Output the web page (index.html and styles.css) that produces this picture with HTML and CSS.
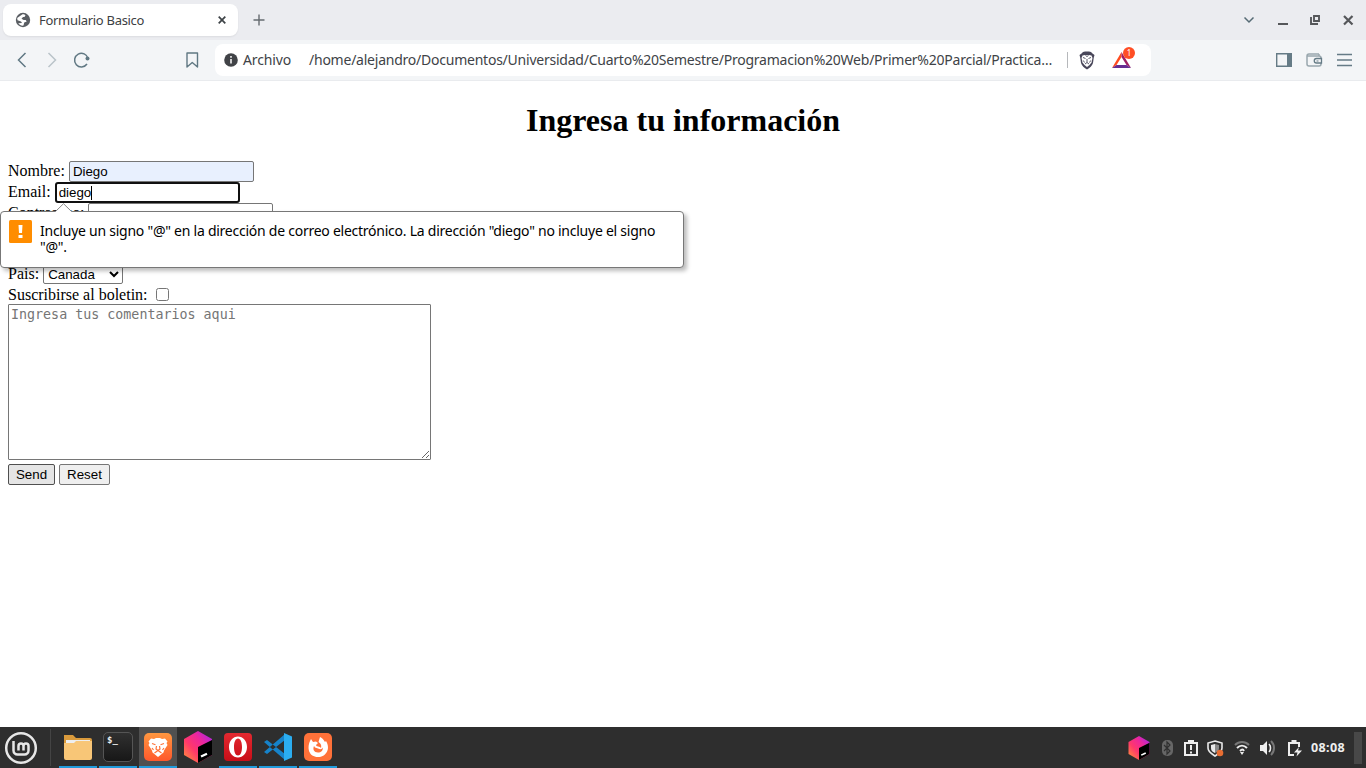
FILE: index.html
```html
<!DOCTYPE html>
<html lang="es">
<head>
<meta charset="utf-8">
<title>Formulario Basico</title>
<link rel="stylesheet" href="styles.css">
</head>
<body>
<svg class="defs" width="0" height="0">
  <defs>
    <linearGradient id="cube" x1="0" y1="1" x2="1" y2="0"><stop offset="0" stop-color="#ff9a35"/><stop offset=".38" stop-color="#ff386b"/><stop offset=".65" stop-color="#ed279a"/><stop offset="1" stop-color="#9a25f5"/></linearGradient>
    <linearGradient id="fade" x1="0" y1="0" x2="0" y2="1"><stop offset="0" stop-color="#ff9740"/><stop offset="1" stop-color="#ff582b"/></linearGradient>
    <linearGradient id="opera" x1="0" y1="0" x2="0" y2="1"><stop offset="0" stop-color="#e32930"/><stop offset="1" stop-color="#c90e18"/></linearGradient>
    <symbol id="toolbox" viewBox="0 0 32 32"><path fill="url(#cube)" d="M16 0 30 8v16L16 32 2 24V8z"/><path fill="#000" d="M16 16 30 9v15L16 32z"/><path stroke="#fff" stroke-width="2.200" d="m19 25.500 6-2.800"/></symbol>
  </defs>
</svg>

<header class="tabs">
  <div class="tab">
    <svg width="16" height="16" viewBox="0 0 16 16"><circle cx="8" cy="8" r="7.200" fill="#5a5e63"/><path fill="#fff" d="M7.500 2.200c1.700 0 2.500.5 3 1.100L9.500 5H8L6.500 6.800 8.700 8h2l1 1.500-2.500 1-.7 3C6.800 14 4.500 13 3.300 11.300L7 11 6 9.500 2.500 8.300 2.200 6z"/></svg>
    <span class="tab-title">Formulario Basico</span>
    <svg width="8" height="8" viewBox="0 0 8 8"><path d="m.7.700 6.600 6.600m0-6.600L.7 7.300" stroke="#3e4347" stroke-width="1.700"/></svg>
  </div>
  <svg class="plus" width="12" height="12" viewBox="0 0 12 12"><path d="M6 .5v11M.5 6h11" stroke="#666b70" stroke-width="1.400"/></svg>
  <svg class="window" width="116" height="20" viewBox="1240 10 116 20" fill="none">
    <path d="m1244.500 17.500 4.500 4.500 4.500-4.500" stroke="#566b75" stroke-width="1.500"/>
    <path d="M1278 24h10" stroke="#55575a" stroke-width="2"/>
    <path d="M1314 16h5v5h-5zM1311 17v7h7" stroke="#55575a" stroke-width="1.900"/>
    <path d="m1344 16 8.500 8.500m0-8.500-8.500 8.500" stroke="#55575a" stroke-width="2.200"/>
  </svg>
</header>

<nav class="toolbar">
  <svg class="navigation" width="188" height="24" viewBox="14 48 188 24" fill="none">
    <path d="m25.500 53-7 7 7 7" stroke="#607883" stroke-width="1.500"/>
    <path d="m48.500 53 7 7-7 7" stroke="#bac4c9" stroke-width="1.500"/>
    <path d="M88 58.500a6.800 6.800 0 1 0-1 5.500" stroke="#607883" stroke-width="1.500"/><circle cx="87.500" cy="58.500" r="2" fill="#607883"/>
    <path d="M187 53h10.500v14l-5.250-4.500L187 67z" stroke="#607883" stroke-width="1.400" stroke-linejoin="round"/>
  </svg>
  <div class="address">
    <svg width="14" height="14" viewBox="0 0 14 14"><circle cx="7" cy="7" r="6.800" fill="#414347"/><path d="M7 3v1.800M7 6v4.500" stroke="#fff" stroke-width="1.500"/></svg>
    <span class="scheme">Archivo</span>
    <span class="url">/home/alejandro/Documentos/Universidad/Cuarto%20Semestre/Programacion%20Web/Primer%20Parcial/Practica…</span>
    <i class="divider"></i>
    <svg class="shield" width="16" height="19" viewBox="0 0 16 19"><path fill="#49475a" d="m4 1 2-.5h4l2 .5 1.500 1.500 2 1.500-.8 3-.7 5c-.5 2.500-3.500 5-6 6.500C5.500 17 2.500 14.500 2 12l-.7-5L.5 4l2-1.500z"/><path fill="#fff" d="M3.500 4.500 6 4h4l2.500.5 1 2.500-1 4.500-2 2.500L8 16l-2.500-2-2-2.500-1-4.500z"/><path d="m4 6.500 2.500 1M12 6.500l-2.500 1M8 8v3.500M6 13l2-1.500 2 1.500M4.300 9.500l1.200 2M11.700 9.500l-1.200 2M6.500 4.500 8 5.500l1.500-1" fill="none" stroke="#49475a" stroke-width=".9"/></svg>
    <span class="rewards"><svg width="19" height="17" viewBox="0 0 19 17"><path fill="#ff4b1f" d="M9.500 0 0 16l4.500-3L9.500 5z"/><path fill="#9e1f63" d="M9.500 0 19 16l-4.500-3L9.500 5z"/><path fill="#662d91" d="m0 16 4.500-3h10L19 16z"/></svg><b>1</b></span>
  </div>
  <svg class="tools" width="78" height="20" viewBox="1275 50 78 20" fill="none">
    <path d="M1276.700 53.700h14.600v12.600h-14.600z" stroke="#657b86" stroke-width="1.400"/><path fill="#657b86" d="M1287 53h5v14h-5z"/>
    <path d="M1319 54h-10a2 2 0 0 0-2 2v8a2 2 0 0 0 2 2h10a2 2 0 0 0 2-2v-6a2 2 0 0 0-2-2h-12M1319 54v2" stroke="#99a7ae" stroke-width="1.500"/><path d="M1321.500 58.500h-5a2 2 0 0 0 0 4.500h5z" fill="#f3f5f7" stroke="#657b86" stroke-width="1.300"/><path d="M1316.500 61h2" stroke="#657b86"/>
    <path d="M1337 54.500h15m-15 5.500h15m-15 5.500h15" stroke="#657b86" stroke-width="1.400"/>
  </svg>
</nav>

<main class="page">
  <h1>Ingresa tu información</h1>
  <form class="form">
    <label class="row"><span class="label">Nombre:</span><input class="field filled" value="Diego"></label>
    <label class="row"><span class="label">Email:</span><span class="focus"><input class="field active" value="diego"><i class="caret"></i></span></label>
    <label class="row password"><span class="label">Contrasena:</span><input class="field" type="password"></label>
    <label class="row"><span class="label">Pais:</span><select class="country"><option>Canada</option></select></label>
    <label class="row"><span class="label">Suscribirse al boletin:</span><input class="check" type="checkbox"></label>
    <textarea class="comments" placeholder="Ingresa tus comentarios aqui"></textarea>
    <div class="buttons"><button class="button pressed" type="button">Send</button><button class="button" type="reset">Reset</button></div>
  </form>
  <div class="bubble">
    <svg class="arrow" width="18" height="10" viewBox="0 0 18 10"><path d="M0 9 8.500.7 17 9v1H0z" fill="#fff"/><path d="M0 8.500h.5L8.500.7l8 7.800h1" fill="none" stroke="#888"/></svg>
    <svg class="warning" width="23" height="23" viewBox="0 0 23 23"><rect width="23" height="23" rx="1.500" fill="#ff8d00"/><path fill="#fff" d="M9.500 5h4L13 13h-3zM9.500 15h4v3h-4z"/></svg>
    <p class="message"><span class="line">Incluye un signo "@" en la dirección de correo electrónico. La dirección "diego" no incluye el signo</span><span class="line">"@".</span></p>
  </div>
</main>

<footer class="taskbar">
  <svg class="mint" width="34" height="34" viewBox="0 0 34 34" fill="none" stroke="#e7e7e7"><circle cx="17" cy="17" r="14.800" stroke-width="2.500"/><path d="M9.500 10v9.500a4 4 0 0 0 4 4h7a4 4 0 0 0 4-4V15a2.500 2.500 0 0 0-5 0v4.500m0-4.500a2.500 2.500 0 0 0-5 0v4.500" stroke-width="2.500"/></svg>
  <i class="separator"></i>
  <div class="apps">
    <span class="app open"><svg width="32" height="32" viewBox="0 0 32 32"><path fill="#d99a3c" d="M2 4h9l3 3h14a2 2 0 0 1 2 2v8H2z"/><path fill="#eee" d="M4 9h24v5H4z"/><path fill="#f8c677" d="M2 12h10l2-2h16v17a2 2 0 0 1-2 2H4a2 2 0 0 1-2-2z"/></svg></span>
    <span class="app open"><span class="terminal">$_</span></span>
    <span class="app open selected"><svg width="32" height="32" viewBox="0 0 32 32"><rect x="2" y="2" width="28" height="28" rx="5" fill="url(#fade)"/><path fill="#fff" d="m9 7.500 3 .5 2-1h4l2 1 3-.5 2.500 3-1 1.500 1 2-3.500 5.500-.5 2L16 26l-5.500-4.500-.5-2L6.500 14l1-2-1-1.500z"/><path fill="none" stroke="#ff7138" stroke-width="1.200" d="m10 12.500 3.500 1.200M22 12.500l-3.500 1.200M14.500 15l-.5 3 2 1.500 2-1.500-.5-3M12.500 22l3.500-2.500 3.500 2.500M10 17l1.500 2M22 17l-1.500 2"/></svg></span>
    <span class="app"><svg width="32" height="32"><use href="#toolbox"/></svg></span>
    <span class="app open"><svg width="32" height="32" viewBox="0 0 32 32"><rect x="2" y="2" width="28" height="28" rx="4" fill="url(#opera)"/><path fill="#fff" fill-rule="evenodd" d="M16 5.500c5 0 9 4.500 9 10.500s-4 10.500-9 10.500S7 22 7 16 11 5.500 16 5.500zM16 7.500c-2.500 0-4 3.500-4 8.500s1.500 8.500 4 8.500 4-3.500 4-8.500-1.500-8.500-4-8.500z"/></svg></span>
    <span class="app open"><svg width="32" height="32" viewBox="0 0 32 32"><path d="m2 11 3-2 18 14v6zM2 21l3 2L23 9V3z" fill="#1683ca"/><path fill="#2badf0" d="m22 2 8 3.500v21L22 30z"/></svg></span>
    <span class="app open"><svg width="32" height="32" viewBox="0 0 32 32"><rect x="2" y="2" width="28" height="28" rx="5" fill="#ff7139"/><path fill="#fff" d="m9 8 2 3 3-.5 2 1.500-2 2c0 1.500 4 1.500 5 3 1-3-1-5-2.500-6L18 6c4 2 4 4 5 5l1-1c5 8 0 16-8 16C7 26 4 17 9 8z"/><path fill="#ff7139" d="M12 15c-1.500 3 0 6.500 4 6.500 3 0 5-2 5-5-1 2-3 2-5 1l-3-1z"/></svg></span>
  </div>
  <svg class="tray" width="182" height="32" viewBox="1127 732 182 32" fill="none">
    <use href="#toolbox" x="1127" y="736" width="24" height="24"/>
    <rect x="1162" y="740" width="11" height="16" rx="5" fill="#666"/><path d="m1164 745 6 6-3 3v-12l3 3-6 6" stroke="#303030" stroke-width="1.200"/>
    <path d="M1185 743h12v12h-12z" stroke="#eee" stroke-width="2"/><path fill="#eee" d="M1188 740h6v4h-6z"/><path d="M1191 745v5m0 1.500v2" stroke="#eee" stroke-width="2"/>
    <path d="m1215 741 7 2v5c0 4-4 6-7 8-3-2-7-4-7-8v-5z" stroke="#e9e9e9" stroke-width="1.600"/><path fill="#e9e9e9" d="M1215 744v9c-3-1-4-3-4-5v-3z"/><path fill="#888" d="m1215 744 4 1v3c0 2-1 4-4 5z"/><circle cx="1220" cy="753" r="3.300" fill="#e76d32"/>
    <path d="M1235 745c4-4 10-4 14 0" stroke="#777" stroke-width="2"/><path d="M1237 748c3-3 7-3 10 0m-7 3c2-2 3-2 4 0" stroke="#eee" stroke-width="2"/><path fill="#eee" d="M1240 752h4l-2 3z"/>
    <path fill="#eee" d="M1260 745h3l4-4v14l-4-4h-3z"/><path d="M1269 744c2 2 2 6 0 8" stroke="#eee" stroke-width="1.600"/><path d="M1271 741c4 4 4 10 0 14" stroke="#777" stroke-width="2"/>
    <path d="M1294 755h-5v-12h10v4M1291.500 741h5" stroke="#eee" stroke-width="2"/><path fill="#eee" d="m1299 747-5 5.500h3.500l-1 4 5.500-6h-4z"/>
  </svg>
  <span class="clock">08:08</span>
  <i class="desktop"></i>
</footer>
</body>
</html>
```
FILE: styles.css
```css
* { box-sizing: border-box; }
html, body { height: 100%; }
body { margin: 0; display: flex; flex-direction: column; overflow: hidden; background: #fff; font-family: "Liberation Serif", serif; }
svg { display: block; flex: none; }
.defs { position: absolute; }
.tabs { height: 40px; flex: none; display: flex; align-items: center; background: #ebecf0; padding: 0 10px 0 3px; font-family: "Noto Sans", sans-serif; }
.tab { width: 235px; height: 32px; display: flex; align-items: center; padding: 0 12px; border-radius: 8px; background: #fff; box-shadow: 0 1px 2px #0001; }
.tab-title { flex: 1; margin-left: 8px; font-size: 13px; letter-spacing: -.3px; color: #3c4043; white-space: nowrap; }
.plus { margin-left: 15px; }
.window { margin-left: auto; }
.toolbar { height: 41px; flex: none; display: flex; align-items: center; background: #f3f5f7; border-bottom: 1px solid #e9ebee; padding: 0 13px 0 14px; font-family: "Noto Sans", sans-serif; }
.address { width: 936px; height: 32px; display: flex; align-items: center; margin-left: 13px; padding-left: 9px; border-radius: 8px; background: #fff; color: #404347; font-size: 14px; white-space: nowrap; }
.scheme { width: 66px; margin-left: 5px; padding-bottom: 2px; flex: none; letter-spacing: -.15px; }
.url { width: 746px; flex: none; padding-bottom: 2px; letter-spacing: -.235px; }
.divider { width: 1px; height: 16px; margin-left: 12px; background: #b6b8bb; }
.shield { margin-left: 11px; }
.rewards { position: relative; margin: 0 0 0 17px; }
.rewards b { position: absolute; top: -5px; left: 11px; width: 12px; height: 12px; border-radius: 50%; background: #ff4e25; color: #fff; font: 8px/12px "Noto Sans", sans-serif; text-align: center; }
.tools { margin-left: auto; }
.page { position: relative; flex: 1; padding: 0 8px; }
h1 { margin: 21px 0 22px; font-size: 32px; line-height: 37px; text-align: center; }
.form { display: flex; flex-direction: column; font-size: 16px; }
.row { height: 21px; display: flex; align-items: center; gap: 4px; line-height: 20px; }
.label { padding-bottom: 2px; }
.password { margin-bottom: 40px; }
.field { width: 185px; height: 21px; padding: 1px 2px; margin: 0; border: 1px solid #767676; border-radius: 2px; font: 13.333px "Liberation Sans", sans-serif; color: #000; background: #fff; outline: 0; }
.filled { padding-left: 3px; background: #e8f0fe; }
.focus { position: relative; display: flex; }
.active { border: 2px solid #101010; border-radius: 3px; }
.caret { position: absolute; top: 4px; left: 36px; width: 1px; height: 14px; background: #000; }
.country { width: 80px; height: 19px; font: 13.333px "Liberation Sans", sans-serif; padding: 0; border: 1px solid #767676; background: #fff; border-radius: 2px; }
.check { width: 13px; height: 13px; margin: 0 0 3px 4px; }
.comments { width: 423px; height: 156px; margin: -2px 0 0; padding: 2px; border: 1px solid #767676; border-radius: 1px; font: 13.333px "DejaVu Sans Mono", monospace; }
.comments::placeholder { color: #757575; }
.buttons { display: flex; gap: 4px; margin-top: 4px; }
.button { height: 21px; padding: 1px 6px; border: 1px solid #767676; border-radius: 2px; background: #efefef; color: #000; font: 13.333px "Liberation Sans", sans-serif; width: 51px; }
.pressed { width: 47px; background: #e5e5e5; border-color: #4f4f4f; }
.bubble { position: absolute; top: 130px; left: 0; width: 684px; height: 57px; display: flex; padding: 8px; border: 1px solid #777; border-radius: 4px; background: #fff; box-shadow: 3px 3px 4px #0004; }
.arrow { position: absolute; top: -9px; left: 54px; }
.message { margin: 3px 0 0 8px; font: 14px/16px "Noto Sans", sans-serif; letter-spacing: -.25px; color: #000; white-space: nowrap; }
.line { display: block; }
.taskbar { height: 41px; flex: none; display: flex; align-items: center; background: #2e2e2e; padding: 0 4px; }
.separator { width: 1px; height: 37px; margin-left: 12px; background: #444; }
.apps { height: 41px; display: flex; gap: 2px; margin-left: 8px; }
.app { width: 38px; height: 41px; display: flex; align-items: center; justify-content: center; padding-top: 1px; border-bottom: 2px solid transparent; }
.open { border-bottom-color: #209bdc; }
.selected { background: #505050; }
.terminal { width: 30px; height: 30px; padding: 2px 3px; border: 1px solid #555; border-radius: 5px; background: linear-gradient(#303030, #171717); color: #eee; font: bold 9px/10px "DejaVu Sans Mono", monospace; }
.tray { margin-left: auto; }
.clock { width: 36px; margin-left: 2px; color: #eee; font: bold 12.5px "Noto Sans", sans-serif; letter-spacing: .4px; }
.desktop { width: 8px; height: 32px; margin-left: 7px; background: #484848; }
```
